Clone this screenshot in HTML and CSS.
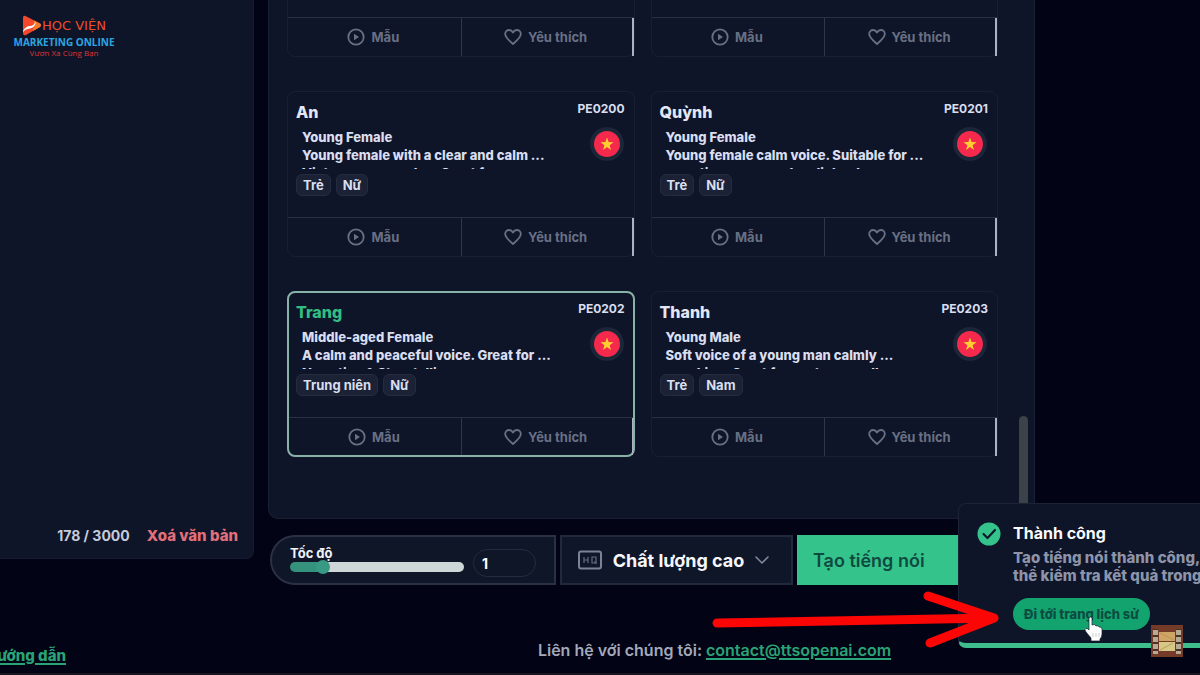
FILE: index.html
```html
<!DOCTYPE html>
<html lang="vi">
<head>
<meta charset="utf-8">
<meta name="viewport" content="width=device-width, initial-scale=1">
<title>Tạo tiếng nói</title>
<link rel="stylesheet" href="styles.css">
</head>
<body>
<svg class="defs" width="0" height="0" aria-hidden="true">
  <symbol id="play" viewBox="0 0 18 18"><circle cx="9" cy="9" r="7.7" fill="none" stroke="currentColor" stroke-width="1.8"/><path d="M7 5.8v6.4L12 9z" fill="currentColor"/></symbol>
  <symbol id="heart" viewBox="0 0 18 18"><path d="M9 16C5.6 13 1.2 9.600 1.200 6.100 1.200 3.600 3 2 5.100 2 6.800 2 8.200 3 9 4.500 9.800 3 11.200 2 12.900 2 15 2 16.800 3.600 16.800 6.100 16.800 9.600 12.400 13 9 16z" fill="none" stroke="currentColor" stroke-width="1.8" stroke-linejoin="round"/></symbol>
  <symbol id="flag" viewBox="0 0 36 36"><circle cx="18" cy="18" r="17" fill="#1b2638"/><circle cx="18" cy="18" r="13" fill="#f4294c"/><path d="M18 11.500l1.600 4.600 4.900.1-3.900 3 1.400 4.700-4-2.800-4 2.800 1.400-4.700-3.900-3 4.900-.1z" fill="#ffce31"/></symbol>
</svg>
<main class="workspace">
  <section class="editor">
    <div class="logo">
      <div class="logo-top">
        <svg width="20" height="22" viewBox="0 0 20 22" aria-hidden="true"><path d="M1 2.500Q1 0 3.500 1L18 8.500Q20 10 18 12L4 20Q1 21 1 18z" fill="#f4472b"/><path d="M11 16L18 12Q20 10 18 8.500L12 5.500Z" fill="#f47a2b"/><path d="M1 16Q4 11 8 11T14 6Q13 13 8 13.500T1 17z" fill="#fff"/></svg>
        <span>HỌC VIỆN</span>
      </div>
      <div class="logo-mid">MARKETING ONLINE</div>
      <div class="logo-sub">Vươn Xa Cùng Bạn</div>
    </div>
    <div class="editor-foot"><span>178 / 3000</span><button class="clear" type="button">Xoá văn bản</button></div>
  </section>
  <div class="side">
    <section class="voices">
      <div class="voice-grid">
        <article class="card">
          <div class="card-body"></div>
          <div class="card-actions"><button type="button"><svg class="icon"><use href="#play"/></svg>Mẫu</button><button type="button"><svg class="icon"><use href="#heart"/></svg>Yêu thích</button></div>
        </article>
        <article class="card">
          <div class="card-body"></div>
          <div class="card-actions"><button type="button"><svg class="icon"><use href="#play"/></svg>Mẫu</button><button type="button"><svg class="icon"><use href="#heart"/></svg>Yêu thích</button></div>
        </article>
        <article class="card">
          <div class="card-body">
            <div class="info"><h3>An</h3><p>Young Female<br>Young female with a clear and calm ...<br>Vietnamese speaker. Great for</p><div class="tags"><span>Trẻ</span><span>Nữ</span></div></div>
            <div class="meta"><span>PE0200</span><svg class="flag"><use href="#flag"/></svg></div>
          </div>
          <div class="card-actions"><button type="button"><svg class="icon"><use href="#play"/></svg>Mẫu</button><button type="button"><svg class="icon"><use href="#heart"/></svg>Yêu thích</button></div>
        </article>
        <article class="card">
          <div class="card-body">
            <div class="info"><h3>Quỳnh</h3><p>Young Female<br>Young female calm voice. Suitable for ...<br>narration, news and audiobooks</p><div class="tags"><span>Trẻ</span><span>Nữ</span></div></div>
            <div class="meta"><span>PE0201</span><svg class="flag"><use href="#flag"/></svg></div>
          </div>
          <div class="card-actions"><button type="button"><svg class="icon"><use href="#play"/></svg>Mẫu</button><button type="button"><svg class="icon"><use href="#heart"/></svg>Yêu thích</button></div>
        </article>
        <article class="card selected">
          <div class="card-body">
            <div class="info"><h3>Trang</h3><p>Middle-aged Female<br>A calm and peaceful voice. Great for ...<br>Narration &amp; Storytelling</p><div class="tags"><span>Trung niên</span><span>Nữ</span></div></div>
            <div class="meta"><span>PE0202</span><svg class="flag"><use href="#flag"/></svg></div>
          </div>
          <div class="card-actions"><button type="button"><svg class="icon"><use href="#play"/></svg>Mẫu</button><button type="button"><svg class="icon"><use href="#heart"/></svg>Yêu thích</button></div>
        </article>
        <article class="card">
          <div class="card-body">
            <div class="info"><h3>Thanh</h3><p>Young Male<br>Soft voice of a young man calmly ...<br>speaking. Great for customer calls</p><div class="tags"><span>Trẻ</span><span>Nam</span></div></div>
            <div class="meta"><span>PE0203</span><svg class="flag"><use href="#flag"/></svg></div>
          </div>
          <div class="card-actions"><button type="button"><svg class="icon"><use href="#play"/></svg>Mẫu</button><button type="button"><svg class="icon"><use href="#heart"/></svg>Yêu thích</button></div>
        </article>
      </div>
      <div class="scroll-thumb"></div>
    </section>
    <div class="toolbar">
      <div class="speed">
        <div class="speed-range"><label for="speed">Tốc độ</label><input id="speed" type="range" min="0" max="100" value="16"></div>
        <input class="speed-value" type="text" value="1" aria-label="Giá trị tốc độ">
      </div>
      <button class="quality" type="button">
        <svg width="24" height="20" viewBox="0 0 24 20" fill="none" stroke="#7c8397" aria-hidden="true"><rect x="1" y="1.500" width="22" height="17" rx="2" stroke-width="2"/><path d="M6 7v6M10 7v6M6 10h4M14 7h4v6h-4zM16.500 11.500l2 2.500" stroke-width="1.200" stroke="#666d82"/></svg>
        <span>Chất lượng cao</span>
        <svg width="14" height="10" viewBox="0 0 14 10" fill="none" stroke="#8088a0" stroke-width="1.600" stroke-linecap="round" stroke-linejoin="round" aria-hidden="true"><path d="M1 2l6 6 6-6"/></svg>
      </button>
      <button class="create" type="button">Tạo tiếng nói</button>
    </div>
  </div>
</main>
<footer class="footer">
  <div class="guide"><a href="#">Hướng dẫn</a></div>
  <div class="contact">Liên hệ với chúng tôi: <a href="mailto:contact@ttsopenai.com">contact@ttsopenai.com</a></div>
</footer>
<aside class="toast" role="status">
  <svg class="check" width="24" height="24" viewBox="0 0 24 24" aria-hidden="true"><circle cx="12" cy="12" r="11.500" fill="#34c48b"/><path d="M6.500 12l4 4 7.500-8" fill="none" stroke="#10182b" stroke-width="2.200" stroke-linecap="round" stroke-linejoin="round"/></svg>
  <div class="toast-body">
    <h2>Thành công</h2>
    <p>Tạo tiếng nói thành công,<br>thể kiểm tra kết quả trong</p>
    <button type="button">Đi tới trang lịch sử</button>
  </div>
</aside>
<svg class="arrow" width="290" height="62" viewBox="0 0 290 62" fill="none" stroke="#fb0505" stroke-width="9" stroke-linecap="round" stroke-linejoin="round" aria-hidden="true"><path d="M6 32L283 27M217 5L283 27L219 52"/></svg>
<svg class="cursor" width="20" height="26" viewBox="0 0 20 26" aria-hidden="true"><path d="M5 2.500Q5 1 6.500 1T8 2.500V9Q11 7.500 12 10 14.500 9 15 11 18 10.500 18 13V18Q18 21 16 23V25H7V22L2 16Q0 13 2 12.500T5 14z" fill="#fff" stroke="#17202b" stroke-width=".7"/><path d="M9 17v4M12 17v4M15 17v4" stroke="#b9bfc5" stroke-width=".8"/></svg>
<svg class="film" width="32" height="32" viewBox="0 0 32 32" aria-hidden="true"><path d="M0 0h32v32H0z" fill="#743c28"/><path d="M2 4h5v24H2zM25 4h5v24h-5z" fill="#4b3229"/><path d="M2 5h5v5H2zM2 12h5v5H2zM2 19h5v5H2zM2 26h5v3H2zM25 5h5v5h-5zM25 12h5v5h-5zM25 19h5v5h-5zM25 26h5v3h-5z" fill="#b5aa96"/><path d="M8 7h16v9H8z" fill="#cda564"/><path d="M8 17h16v9H8z" fill="#d6c988"/><path d="M9 8l14 7M9 25l13-7" stroke="#b98d50" stroke-width=".8"/></svg>
</body>
</html>
```
FILE: styles.css
```css
* { box-sizing: border-box; }
body {
  margin: 0;
  min-height: 100vh;
  display: flex;
  flex-direction: column;
  overflow: hidden;
  position: relative;
  background: #020314;
  color: #d9def0;
  font-family: Inter, "Noto Sans", sans-serif;
  font-weight: 700;
  border-bottom: 2px solid #19151f;
}
button, input { font: inherit; color: inherit; margin: 0; }
button { cursor: pointer; }
h2, h3, p { margin: 0; }
.defs { position: absolute; }

.workspace {
  display: grid;
  grid-template-columns: 254px 1fr;
  gap: 14px;
  padding-right: 165px;
  height: calc(100vh - 90px);
}
.editor {
  display: flex;
  flex-direction: column;
  justify-content: space-between;
  margin-bottom: 26px;
  padding: 14px 15px 12px 17px;
  background: #0f1528;
  border: 1px solid #171d30;
  border-width: 0 1px 1px 0;
  border-radius: 0 0 8px 0;
}
.logo { width: 94px; white-space: nowrap; }
.logo-top { display: flex; align-items: center; padding-left: 5px; height: 23px; font: 13px/22px "DejaVu Sans", sans-serif; color: #ee4d2c; }
.logo-mid { font: 700 10px/11px "Open Sans", sans-serif; color: #2ba5e2; text-align: center; display: flex; justify-content: center; }
.logo-sub { font: 8px/9px "Open Sans", sans-serif; color: #df3437; text-align: center; }
.editor-foot { display: flex; justify-content: flex-end; align-items: center; gap: 17px; font-size: 14px; line-height: 20px; color: #c6cbdc; }
.clear { padding: 0; border: 0; background: none; color: #e36f7b; font-size: 15px; font-weight: 800; }

.side { display: flex; flex-direction: column; gap: 16px; min-width: 0; min-height: 0; }
.voices {
  position: relative;
  flex: 1;
  min-height: 0;
  overflow: hidden;
  display: flex;
  flex-direction: column;
  justify-content: flex-end;
  padding: 0 36px 61px 18px;
  background: #0f1528;
  border: 1px solid #1a2034;
  border-top: 0;
  border-radius: 0 0 10px 10px;
}
.voice-grid { display: grid; grid-template-columns: 1fr 1fr; gap: 34px 16px; }
.card { border: 1px solid #191f32; border-radius: 8px; }
.card-body { display: flex; justify-content: space-between; height: 125px; padding: 8px 9px 0 8px; }
.info h3 { font-size: 16px; line-height: 24px; font-weight: 800; color: #e3e7f5; }
.info p { height: 45px; padding: 4px 6px 0; overflow: hidden; font-size: 13px; line-height: 18px; font-weight: 800; white-space: nowrap; }
.tags { display: flex; gap: 5px; margin-top: 5px; }
.tags span { height: 22px; padding: 0 6px; border: 1px solid #252c3f; border-radius: 6px; background: #1b2235; font-size: 13px; line-height: 20px; }
.meta { display: flex; flex-direction: column; align-items: flex-end; font-size: 12px; line-height: 17px; }
.flag { width: 36px; height: 36px; margin-top: 9px; }
.card-actions { display: grid; grid-template-columns: 1fr 1fr; height: 39px; border-top: 1px solid #2a3043; }
.card-actions button { display: flex; align-items: center; justify-content: center; gap: 6px; padding: 0 2px 0 0; border: 0; background: none; color: #687085; font-size: 13px; font-weight: 700; }
.card-actions button + button { border-left: 1px solid #30364a; border-right: 2px solid #adb2c1; }
.icon { width: 18px; height: 18px; }
.selected { border: 2px solid #88b2a8; }
.selected .card-body { height: 124px; padding: 7px 8px 0 7px; }
.selected .card-actions { height: 38px; }
.selected .card-actions button + button { border-right-width: 1px; }
.selected h3 { color: #32be83; }
.scroll-thumb { position: absolute; right: 6px; bottom: 4px; width: 9px; height: 98px; border-radius: 5px; background: #3b4348; }

.toolbar { display: grid; grid-template-columns: 286px 233px 1fr; gap: 4px; height: 50px; padding-left: 2px; }
.speed { display: flex; align-items: center; gap: 9px; padding: 0 18px; border: 2px solid #2b3144; border-radius: 25px 0 0 25px; background: #0f1628; }
.speed-range { display: flex; flex-direction: column; flex: 1; font-size: 13px; line-height: 14px; color: #f0f2f8; }
#speed { appearance: none; width: 100%; height: 14px; background: none; }
#speed::-webkit-slider-runnable-track { height: 10px; border-radius: 5px; background: linear-gradient(90deg, #35927c 19%, #ced7d7 19%); }
#speed::-webkit-slider-thumb { appearance: none; width: 14px; height: 14px; margin-top: -2px; border-radius: 50%; background: #389985; }
.speed-value { width: 63px; height: 28px; margin-top: 6px; padding: 0 8px; border: 1px solid #252b3e; border-radius: 14px; background: none; font-size: 14px; color: #fff; }
.quality { display: flex; align-items: center; justify-content: center; gap: 11px; padding: 0 6px 0 0; border: 2px solid #23293c; background: #0f1628; color: #f6f7fc; font-size: 18px; white-space: nowrap; }
.create { padding: 0 16px; border: 0; background: #34c48b; color: #10493f; font-size: 18px; font-weight: 600; text-align: left; }

.footer { display: grid; grid-template-columns: 66px 1fr; font-size: 15px; line-height: 22px; padding-top: 54px; }
.footer a { color: #2aa476; text-decoration-thickness: 2px; text-underline-offset: 2px; }
.guide { display: flex; justify-content: flex-end; padding-top: 6px; font-weight: 800; white-space: nowrap; }
.contact { text-align: center; padding-left: 163px; font-size: 16px; font-weight: 600; color: #a3a9bb; }

.toast { position: absolute; right: 0; bottom: 25px; width: 242px; height: 145px; overflow: hidden; display: flex; gap: 12px; padding: 18px 0 0 18px; border-top: 1px solid #1c2336; border-left: 1px solid #1c2336; border-bottom: 5px solid #3fbe8d; border-radius: 8px 0 0 8px; background: #0f1528; }
.check { flex: none; }
.toast-body { flex: none; white-space: nowrap; }
.toast h2 { font-size: 16px; line-height: 22px; color: #fafbff; }
.toast p { margin: 5px 0 13px; font-size: 15px; line-height: 18px; color: #8d94a9; font-weight: 800; }
.toast button { height: 32px; padding: 0 11px; border: 0; border-radius: 16px; background: #13a36f; color: #0b4d40; font-size: 13px; font-weight: 800; }
.arrow { position: absolute; right: 199px; bottom: 20px; }
.cursor { position: absolute; right: 96px; bottom: 31px; }
.film { position: absolute; right: 17px; bottom: 16px; }
```
